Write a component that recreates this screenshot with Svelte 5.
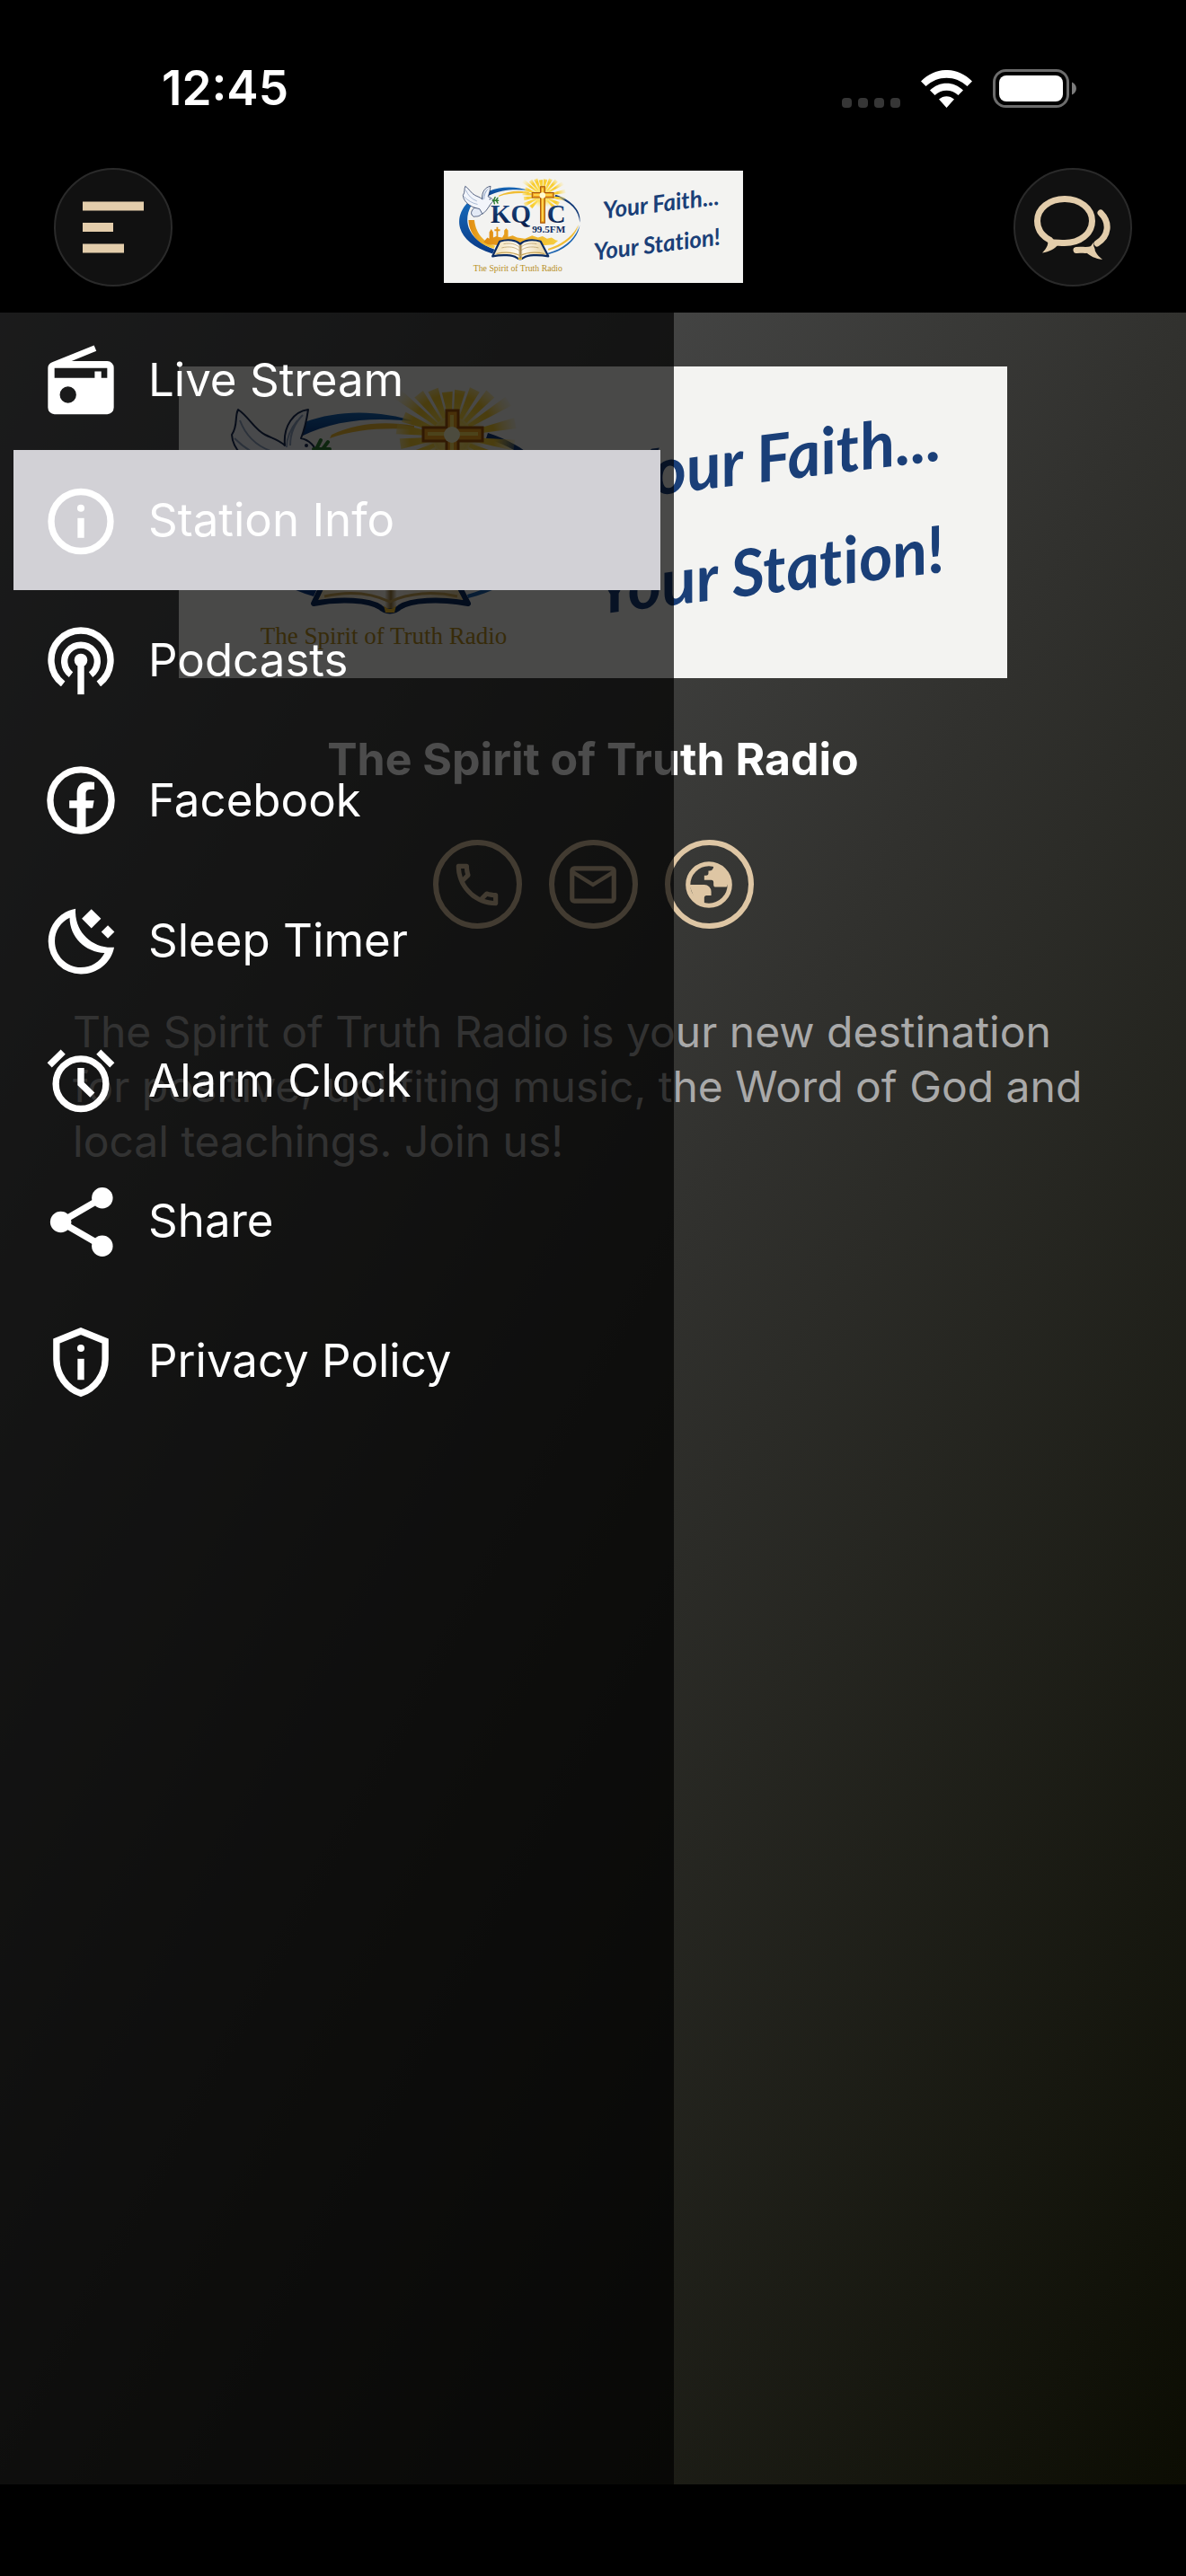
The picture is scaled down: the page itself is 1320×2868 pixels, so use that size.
<script>
  const menu = [
    { id: 'radio', label: 'Live Stream' },
    { id: 'info', label: 'Station Info' },
    { id: 'podcast', label: 'Podcasts' },
    { id: 'facebook', label: 'Facebook' },
    { id: 'moon', label: 'Sleep Timer' },
    { id: 'alarm', label: 'Alarm Clock' },
    { id: 'share', label: 'Share' },
    { id: 'shield', label: 'Privacy Policy' },
  ];
  let active = $state('info');

  // Light rays behind the cross: angle in degrees and outer radius.
  const rays = [
    [-172, 62], [-158, 58], [-142, 76], [-128, 60], [-112, 56], [-96, 50], [-80, 52], [-64, 58],
    [-48, 64], [-32, 74], [-12, 72], [8, 70], [26, 56], [44, 54], [136, 50], [154, 62], [172, 58],
  ];
</script>

{#snippet banner(prefix)}
  <svg class="banner-art" viewBox="0 0 922 347" role="img" aria-label="KQTC 99.5FM, The Spirit of Truth Radio">
    <defs>
      <linearGradient id="{prefix}-blue" x1="0" y1="0" x2="0" y2="1">
        <stop offset="0" stop-color="#1668b8" />
        <stop offset="1" stop-color="#0a3a86" />
      </linearGradient>
      <linearGradient id="{prefix}-navy" x1="0" y1="0" x2="0" y2="1">
        <stop offset="0" stop-color="#1d4d8c" />
        <stop offset="1" stop-color="#061a45" />
      </linearGradient>
      <linearGradient id="{prefix}-gold" x1="0" y1="0" x2="1" y2="0">
        <stop offset="0" stop-color="#e08a10" />
        <stop offset="1" stop-color="#f7cf3f" />
      </linearGradient>
      <linearGradient id="{prefix}-page" x1="0" y1="0" x2="1" y2="0">
        <stop offset="0" stop-color="#f0dfb4" />
        <stop offset="0.46" stop-color="#fffaf0" />
        <stop offset="0.5" stop-color="#9c7b3c" />
        <stop offset="0.54" stop-color="#fffaf0" />
        <stop offset="1" stop-color="#e6cf98" />
      </linearGradient>
      <radialGradient id="{prefix}-glow">
        <stop offset="0" stop-color="#fff6a8" />
        <stop offset="0.5" stop-color="#ffd93a" stop-opacity="0.8" />
        <stop offset="1" stop-color="#ffe670" stop-opacity="0" />
      </radialGradient>
      <radialGradient id="{prefix}-ray" gradientUnits="userSpaceOnUse" cx="0" cy="0" r="78">
        <stop offset="0" stop-color="#ffe14a" />
        <stop offset="0.6" stop-color="#f8cc30" />
        <stop offset="1" stop-color="#ffe98a" stop-opacity="0" />
      </radialGradient>
    </defs>
    <rect width="922" height="347" fill="#f3f3f1" />

    <path d="M266 62C222 48 178 48 140 62L136 78C176 58 222 56 266 62Z" fill="url(#{prefix}-blue)" />
    <path d="M72 100C26 150 40 222 150 256L156 243C78 214 56 160 84 108Z" fill="url(#{prefix}-blue)" />
    <path d="M262 66C226 60 196 64 170 76L168 80C196 70 226 68 262 70Z" fill="#f0bd33" />
    <path d="M76 152C78 196 106 228 154 240L158 232C118 218 98 190 94 152Z" fill="url(#{prefix}-gold)" />
    <path d="M344 74C400 92 424 128 419 160C416 122 392 96 342 80Z" fill="#123a78" />
    <path d="M419 168C412 212 372 246 322 258L321 254C370 240 404 212 419 168Z" fill="#1b63b0" />
    <path d="M415 166C406 204 372 232 322 246L321 241C366 226 398 202 415 166Z" fill="#f0bd33" />

    <g transform="translate(304 78)">
      {#each rays as [angle, reach]}
        <path d="M22 -2L{reach} -6L{reach} 6L22 2Z" transform="rotate({angle})" fill="url(#{prefix}-ray)" />
      {/each}
      <circle r="38" fill="url(#{prefix}-glow)" />
    </g>

    <path
      d="M122 220L134 206L140 210V190L146 180L152 190V206L162 202V186H156V181H162V174H167V181H173V186H167V204L180 206L186 196V184L192 178L198 184V204L212 200L226 206L250 210L272 200L290 206L304 202L318 210L332 206L344 214L352 216L338 228L312 230L170 230L136 228Z"
      fill="url(#{prefix}-gold)"
    />
    <path d="M150 264L172 218C198 210 222 214 235 226C248 214 272 210 298 218L322 264C290 258 258 260 246 268C240 274 230 274 224 268C212 260 180 258 150 264Z" fill="url(#{prefix}-page)" stroke="#0b2c63" stroke-width="6" stroke-linejoin="round" />
    <path d="M162 256C188 250 214 252 235 262C256 252 284 250 310 256" fill="none" stroke="#c9a455" stroke-width="3" />
    <path d="M184 226C206 222 222 226 232 236M178 238C202 232 220 236 232 246M286 226C264 222 248 226 238 236M292 238C268 232 250 236 238 246" fill="none" stroke="#b79a63" stroke-width="2" />
    <path d="M228 266Q235 274 242 266L240 274H230Z" fill="#f3bf2d" />

    <path d="M298 49H311V68H338V83H311V161H298V83H272V68H298Z" fill="#f3a51f" stroke="#a4540c" stroke-width="3" />
    <path d="M304 54V156M277 75H333" stroke="#ffe25a" stroke-width="4" />
    <circle cx="304" cy="76" r="9" fill="#fffbd0" />

    <path d="M118 134C110 126 106 118 94 114C74 106 60 92 59 76C66 66 62 56 66 48C78 56 84 70 96 76C104 80 112 82 118 88C116 66 128 50 144 48C142 62 140 70 136 80C146 82 152 90 152 94C140 104 136 122 118 134Z" fill="#f2f5fb" stroke="#1a2c55" stroke-width="2" stroke-linejoin="round" />
    <path d="M94 114C84 124 80 134 92 142C100 140 108 144 118 132L110 118Z" fill="#e3eaf6" stroke="#1a2c55" stroke-width="2" stroke-linejoin="round" />
    <path d="M68 60C74 76 86 88 102 94M62 80C74 92 86 100 104 104M138 54C128 64 124 76 124 88M132 60C124 70 120 80 120 90" fill="none" stroke="#8fa4c4" stroke-width="2" />
    <circle cx="142" cy="88" r="2" fill="#1a2c55" />
    <path d="M150 92L168 92M154 90L158 82M160 92L166 84M154 94L156 102M162 93L166 100" stroke="#2e7d32" stroke-width="4" stroke-linecap="round" />

    <g class="call-sign" fill="url(#{prefix}-navy)">
      <text x="144" y="161">KQ</text>
      <text x="318" y="161">C</text>
    </g>
    <text class="frequency" x="272" y="190">99.5FM</text>
    <text class="tagline" x="228" y="309" text-anchor="middle">The Spirit of Truth Radio</text>

    <g class="slogan">
      <text transform="translate(494 148) rotate(-7)">Your Faith...</text>
      <text transform="translate(466 276) rotate(-7)">Your Station!</text>
    </g>
  </svg>
{/snippet}

{#snippet menuIcon(id)}
  <svg class="menu-icon" viewBox="0 0 24 24" aria-hidden="true">
    {#if id === 'radio'}
      <path
        fill="currentColor"
        fill-rule="evenodd"
        d="M3.3 6.6 16 1.5l.7 1.7-7.5 3.1H20a2 2 0 0 1 2 2V20.400a2 2 0 0 1-2 2H4a2 2 0 0 1-2-2V8.300c0-.8.5-1.400 1.300-1.700zM4 8.400v3h12.200V9.400h2v2H20v-3zM8.100 14a2.500 2.500 0 1 0 0 5 2.500 2.500 0 0 0 0-5z"
      />
    {:else if id === 'info'}
      <circle class="line" cx="12" cy="12.400" r="9" />
      <circle fill="currentColor" cx="12" cy="8.400" r="1.100" />
      <path class="line" d="M12 11.400v6" />
    {:else if id === 'podcast'}
      <path class="line" d="M6.600 19.200a9 9 0 1 1 10.800 0M9 16.400a5 5 0 1 1 6 0" />
      <circle fill="currentColor" cx="12" cy="12" r="2" />
      <path class="line" d="M12 12.400v10" />
    {:else if id === 'facebook'}
      <circle class="line" cx="12" cy="12" r="9.300" />
      <path fill="currentColor" d="M10.800 21.500v-7.100H8.500v-2.300h2.300V9.900c0-2.300 1.300-3.500 3.400-3.500.9 0 1.900.1 1.900.1v2.200h-1.300c-1 0-1.300.6-1.300 1.300v2.100H16l-.4 2.300h-2.100v7.100z" />
    {:else if id === 'moon'}
      <path
        fill="currentColor"
        fill-rule="evenodd"
        d="M10.400 2.400C5.700 3.200 2.100 7.300 2.100 12.300a9.900 9.900 0 0 0 10 9.900c4.900 0 9.100-3.400 10-8.100C15.500 14.600 9.900 9.400 10.400 2.400zM8.600 5.100C5.900 6.400 4.100 9.100 4.100 12.200c0 4.400 3.500 8 7.900 8 3.100 0 5.800-1.700 7.200-4.400C13.400 15.600 8.600 11 8.600 5.100z"
      />
      <path fill="currentColor" d="M15.200 2.500l2.900 2.900-2.900 2.900-2.900-2.900zM20.200 7.400l2 2-2 2-2-2z" />
    {:else if id === 'alarm'}
      <circle class="line" cx="12" cy="13" r="7.600" />
      <path class="line" d="M12 8.200V13l3.500 3.400M2.500 7.300l4.100-4M17.400 3.300l4.100 4" />
    {:else if id === 'share'}
      <path class="line" d="M18.500 5.100 5.900 12.400l12.600 7.300" />
      <g fill="currentColor">
        <circle cx="18.500" cy="5.100" r="3.200" />
        <circle cx="5.900" cy="12.400" r="3.200" />
        <circle cx="18.500" cy="19.700" r="3.200" />
      </g>
    {:else}
      <path class="line" d="M12 3 4.600 6v5.600c0 4.600 3.100 8.900 7.400 10.300 4.300-1.400 7.400-5.700 7.400-10.300V6z" />
      <circle fill="currentColor" cx="12" cy="8.200" r="1.100" />
      <path class="line" d="M12 11.400v6.400" />
    {/if}
  </svg>
{/snippet}

<div class="app">
  <header>
    <div class="status">
      <time>12:45</time>
      <div class="indicators">
        <span class="signal"><i></i><i></i><i></i><i></i></span>
        <svg class="wifi" viewBox="0 0 57 42" aria-hidden="true">
          <path d="M0 12.500C16-4.200 41-4.200 57 12.500L51.500 18C38.500 5.500 18.500 5.500 5.500 18ZM10 22.500C20.500 12 36.500 12 47 22.500L41.500 28C34 21 23 21 15.500 28ZM20 32.500C25 28 32 28 37 32.500L28.500 42Z" fill="#fff" />
        </svg>
        <svg class="battery" viewBox="0 0 93 43" aria-hidden="true">
          <rect x="1.500" y="1.500" width="82" height="40" rx="13" fill="none" stroke="#6c6c6c" stroke-width="3" />
          <rect x="7" y="7" width="71" height="29" rx="8" fill="#fff" />
          <path d="M88 14.500C94.500 17 94.500 26 88 28.500Z" fill="#7c7c7c" />
        </svg>
      </div>
    </div>
    <div class="toolbar">
      <button class="round" aria-label="Menu">
        <svg class="bars" viewBox="0 0 68 58" aria-hidden="true">
          <path d="M0 5.500H68M0 29H34M0 52.500H46" stroke="#e3cdab" stroke-width="10" />
        </svg>
      </button>
      <div class="brand">{@render banner('small')}</div>
      <button class="round" aria-label="Chat">
        <svg class="chat" viewBox="0 0 88 74" aria-hidden="true">
          <g fill="none" stroke="#e3cdab" stroke-width="7" stroke-linecap="round">
            <path d="M18 51C9 46 4.500 39 4.500 30C4.500 16 18 5.500 35 5.500S65.500 16 65.500 30S52 54.500 35 54.500C30 54.500 27 54 23 54" />
            <path d="M75 21C86 32 84 47 71 55M48 62.500C54 61.500 59 63.500 65 61.500" />
          </g>
          <path d="M14 47C19 55 15 60 10 65.500C18 64.500 24 61 28 56L20 48ZM67 54C67 63 71 68 77 73C69 72 63 69 59 65L64 58Z" fill="#e3cdab" />
        </svg>
      </button>
    </div>
  </header>

  <div class="stage">
    <main>
      <div class="hero">{@render banner('large')}</div>
      <h1>The Spirit of Truth Radio</h1>
      <div class="contacts">
        <button class="contact" aria-label="Call">
          <svg viewBox="0 0 24 24" aria-hidden="true">
            <path d="M6.540 5c.06.89.21 1.760.45 2.590l-1.200 1.200C5.380 7.590 5.120 6.320 5.030 5zm9.860 12.020c.85.24 1.720.39 2.600.45v1.490c-1.320-.09-2.590-.35-3.800-.75zM7.500 3H4c-.55 0-1 .45-1 1 0 9.390 7.610 17 17 17 .55 0 1-.45 1-1v-3.490c0-.55-.45-1-1-1-1.240 0-2.450-.2-3.570-.57-.1-.04-.21-.05-.31-.05-.26 0-.51.1-.71.29l-2.200 2.200c-2.830-1.450-5.150-3.760-6.590-6.590l2.200-2.200c.28-.28.36-.67.25-1.020C8.700 6.450 8.500 5.250 8.500 4c0-.55-.45-1-1-1z" fill="currentColor" />
          </svg>
        </button>
        <button class="contact" aria-label="Email">
          <svg viewBox="0 0 24 24" aria-hidden="true">
            <path d="M20 4H4a2 2 0 0 0-2 2v12c0 1.100.9 2 2 2h16a2 2 0 0 0 2-2V6a2 2 0 0 0-2-2zm0 14H4V8l8 5 8-5zm-8-7L4 6h16z" fill="currentColor" />
          </svg>
        </button>
        <button class="contact" aria-label="Website">
          <svg viewBox="0 0 24 24" aria-hidden="true">
            <circle class="line" cx="12" cy="12" r="9" />
            <path d="M14 3.500v.7a1.800 1.800 0 0 1-1.800 1.800h-.4v1a1 1 0 0 1-1 1H10v2h3a1 1 0 0 1 1 1v1a1 1 0 0 0 1 1h4a1 1 0 0 0 1-1l1-1-2-5zM3.500 12H10a3 3 0 0 1 3 3v1.600h-2a1 1 0 0 0-1 1v3l-4-2z" fill="currentColor" />
          </svg>
        </button>
      </div>
      <p>The Spirit of Truth Radio is your new destination for positive, uplifiting music, the Word of God and local teachings. Join us!</p>
    </main>

    <nav class="drawer" aria-label="Main menu">
      <ul>
        {#each menu as item}
          <li>
            <button class="entry" class:active={active === item.id} onclick={() => (active = item.id)}>
              {@render menuIcon(item.id)}
              <span>{item.label}</span>
            </button>
          </li>
        {/each}
      </ul>
    </nav>
  </div>
</div>

<style>
  :global(body) {
    background: #000;
  }
  .app {
    display: flex;
    flex-direction: column;
    min-height: 100vh;
    box-sizing: border-box;
    padding-bottom: 102px;
    background: #000;
    color: #fff;
    font-family: Inter, Roboto, sans-serif;
  }
  button {
    margin: 0;
    padding: 0;
    border: 0;
    background: none;
    color: inherit;
    font: inherit;
    cursor: pointer;
  }
  svg {
    display: block;
  }
  .line {
    fill: none;
    stroke: currentColor;
    stroke-width: 2;
  }

  header {
    position: relative;
    z-index: 2;
    background: #000;
    border-bottom: 3px solid #000;
  }
  .status {
    display: flex;
    align-items: center;
    justify-content: space-between;
    height: 124px;
    padding: 36px 122px 0 180px;
  }
  time {
    font-size: 53px;
    line-height: 60px;
    font-weight: 600;
  }
  .indicators {
    display: flex;
    align-items: flex-end;
  }
  .signal {
    display: flex;
    gap: 7px;
    margin-right: 23px;
  }
  .signal i {
    width: 11px;
    height: 11px;
    border-radius: 4px;
    background: #363636;
  }
  .wifi {
    width: 57px;
    height: 42px;
    margin-right: 23px;
  }
  .battery {
    width: 93px;
    height: 43px;
  }
  .toolbar {
    display: flex;
    align-items: center;
    justify-content: space-between;
    height: 185px;
    padding: 0 60px;
  }
  .round {
    display: grid;
    place-items: center;
    box-sizing: border-box;
    width: 132px;
    height: 132px;
    border: 2px solid #2a2a2a;
    border-radius: 50%;
    background: #111;
  }
  .bars {
    width: 68px;
    height: 58px;
  }
  .chat {
    width: 88px;
    height: 74px;
  }
  .brand {
    width: 333px;
  }
  .banner-art {
    width: 100%;
    height: auto;
  }
  .call-sign {
    font: 700 80px "Liberation Serif", serif;
  }
  .frequency {
    font: 700 31px "Liberation Serif", serif;
    fill: #0d2b5e;
  }
  .tagline {
    font: 400 27px "Liberation Serif", serif;
    fill: #b8901f;
  }
  .slogan {
    font: italic 700 72px Lato, sans-serif;
    font-variant-ligatures: none;
    fill: #1a3f78;
  }

  .stage {
    position: relative;
    flex: 1;
    background: linear-gradient(to bottom right, #5b5c5e, #31312e 50%, #0c0d03);
  }
  main {
    display: flex;
    flex-direction: column;
    align-items: center;
    padding: 60px 81px;
  }
  .hero {
    width: 922px;
    max-width: 100%;
  }
  h1 {
    margin: 60px 0;
    font-size: 50px;
    line-height: 60px;
    font-weight: 700;
    text-align: center;
  }
  .contacts {
    display: flex;
    gap: 30px;
  }
  .contact {
    display: grid;
    place-items: center;
    box-sizing: border-box;
    width: 99px;
    height: 99px;
    border: 6px solid #dec6a4;
    border-radius: 50%;
    color: #dec6a4;
  }
  .contact svg {
    width: 62px;
    height: 62px;
  }
  p {
    width: 100%;
    margin: 84px 0 0;
    color: #a9a9a9;
    font-size: 48px;
    line-height: 61px;
  }

  .drawer {
    position: absolute;
    inset: 0 auto 0 0;
    width: 750px;
    max-width: 100%;
    background: rgba(0, 0, 0, 0.7);
  }
  ul {
    list-style: none;
    margin: -3px 0 0;
    padding: 0 15px;
  }
  .entry {
    display: flex;
    align-items: center;
    gap: 31px;
    width: 100%;
    height: 156px;
    padding: 0 31px;
    font-size: 51px;
    line-height: 60px;
    text-align: left;
  }
  .entry.active {
    background: #d2d1d6;
  }
  .menu-icon {
    width: 88px;
    height: 88px;
  }
</style>
